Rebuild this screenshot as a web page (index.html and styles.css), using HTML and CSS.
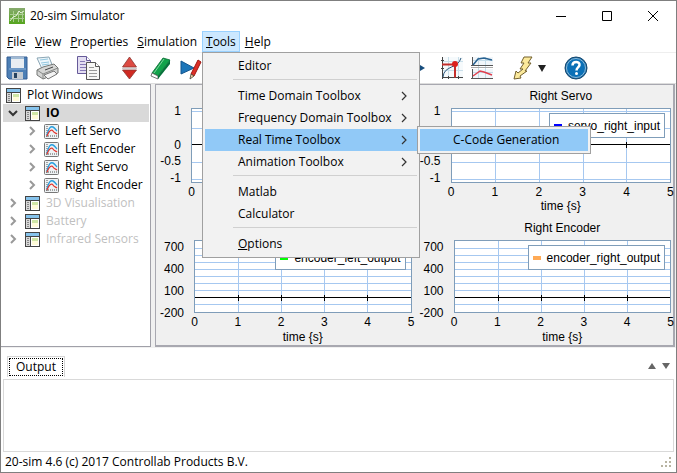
FILE: index.html
```html
<!DOCTYPE html>
<html lang="en">
<head>
<meta charset="utf-8">
<title>20-sim Simulator</title>
<link rel="stylesheet" href="styles.css">
</head>
<body>
<svg class="defs" aria-hidden="true">
  <defs>
    <symbol id="i-window" viewBox="0 0 15 15">
      <rect x=".5" y=".5" width="14" height="14" fill="#fff" stroke="#444"/>
      <path d="M1 1h13v3H1z" fill="#86c3ec"/>
      <path d="M1 4.500h13M5.500 5v9" stroke="#444"/>
      <path d="M1 5h4v9H1z" fill="#d8d8d8"/>
      <path d="M2 6.500h2M2 8.500h2M2 10.500h2M2 12.500h2" stroke="#888"/>
      <path d="M7 6h6v3H7z" fill="#cfe6a5"/>
      <path d="M7 9h6v4H7z" fill="#fffbd8"/>
    </symbol>
    <symbol id="i-plot" viewBox="0 0 15 15">
      <rect x=".5" y=".5" width="14" height="14" rx="1" fill="#eef2f4" stroke="#777"/>
      <path d="M3 2v11M2 12h11" stroke="#555" stroke-dasharray="1 1"/>
      <path d="M3 11C5 3 7 2 9 3S12 6 13 7" fill="none" stroke="#289fdf" stroke-width="1.500"/>
      <path d="M3 12C5 6 8 5 9 7S12 9 13 10" fill="none" stroke="#e2362e" stroke-width="1.200"/>
    </symbol>
    <symbol id="i-chev" viewBox="0 0 8 10">
      <path d="M2 1l4 4-4 4" fill="none" stroke="currentColor" stroke-width="2"/>
    </symbol>
    <symbol id="i-arrow" viewBox="0 0 8 10">
      <path d="M2 1l4 4-4 4" fill="none" stroke="#333" stroke-width="1.200"/>
    </symbol>
  </defs>
</svg>
<div class="window">
  <header class="titlebar">
    <svg class="app-icon" viewBox="0 0 16 16">
      <defs><linearGradient id="g-app" x2="0" y2="1"><stop stop-color="#87aa6e"/><stop offset="1" stop-color="#55a51d"/></linearGradient></defs>
      <path fill="url(#g-app)" d="M0 0h16v16H0z"/>
      <path d="M1 6.500h14M1 10.500h14M4.500 3v11M9.500 3v11M13.500 3v11" stroke="#a9cc90"/>
      <path d="M1 13L4 9l3-1 3-5 2 2 3-2" fill="none" stroke="#e3f0d9"/>
    </svg>
    <h1>20-sim Simulator</h1>
    <button class="win-btn" aria-label="Minimize"><svg viewBox="0 0 12 12"><path d="M1 6.500h10" stroke="#000"/></svg></button>
    <button class="win-btn" aria-label="Maximize"><svg viewBox="0 0 12 12"><path d="M1.500 1.500h9v9h-9z" fill="none" stroke="#000"/></svg></button>
    <button class="win-btn" aria-label="Close"><svg viewBox="0 0 12 12"><path d="M1 1l10 10M11 1L1 11" stroke="#000"/></svg></button>
  </header>

  <nav class="menubar">
    <button><u>F</u>ile</button>
    <button><u>V</u>iew</button>
    <button><u>P</u>roperties</button>
    <button><u>S</u>imulation</button>
    <div class="menu-host">
      <button class="open"><u>T</u>ools</button>
      <div class="menu">
        <button>Editor</button>
        <hr>
        <button>Time Domain Toolbox<svg><use href="#i-arrow"/></svg></button>
        <button>Frequency Domain Toolbox<svg><use href="#i-arrow"/></svg></button>
        <div class="menu-host">
          <button class="active">Real Time Toolbox<svg><use href="#i-arrow"/></svg></button>
          <div class="submenu"><button class="active">C-Code Generation</button></div>
        </div>
        <button>Animation Toolbox<svg><use href="#i-arrow"/></svg></button>
        <hr>
        <button>Matlab</button>
        <button>Calculator</button>
        <hr>
        <button><span><u>O</u>ptions</span></button>
      </div>
    </div>
    <button><u>H</u>elp</button>
  </nav>

  <div class="toolbar">
    <div class="tools tools-file">
      <button aria-label="Save"><svg viewBox="0 0 24 24">
        <path d="M2 1h20v22H4l-2-2z" fill="#4d7fb5" stroke="#345f94"/>
        <path d="M6 1h13v11H6z" fill="#e8edf2"/><path d="M6 1h13v2H6z" fill="#9fb9d3"/>
        <path d="M4 13h17" stroke="#8fb3d8"/><path d="M7 16h11v7H7z" fill="#c3cad1"/><path d="M9 17h3v5H9z" fill="#26425f"/>
      </svg></button>
      <button aria-label="Print"><svg viewBox="0 0 24 24">
        <path d="M2 2l12-1 4 10-11 2z" fill="#edf6fb" stroke="#8ba6b5"/><path d="M5 4l8-1M6 7l8-1M7 9l7-1" stroke="#92c7df"/>
        <path d="M2 14l6-3 11-3 4 4v5L8 23l-6-4z" fill="#d5d6d5" stroke="#747674"/><path d="M2 14l6 4 15-6M8 18v5" fill="none" stroke="#858785"/>
        <path d="M9 19l10-4 3 3-9 5z" fill="#f4f4f4" stroke="#777"/><path d="M10 14l8-3" stroke="#444"/>
      </svg></button>
    </div>
    <button aria-label="Copy"><svg viewBox="0 0 24 24">
      <path d="M.5.500h9l4 4v13H.5z" fill="#e3def1" stroke="#665a99"/><path d="M9.500.500v4h4" fill="#fff" stroke="#665a99"/>
      <path d="M3 5.500h5M3 8.500h8M3 11.500h8M3 14.500h6" stroke="#8679b6"/>
      <path d="M9.500 6.500h9l4 4v13h-13z" fill="#f7f7f5" stroke="#555"/><path d="M18.500 6.500v4h4" fill="#fff" stroke="#555"/>
      <path d="M12 11.500h5M12 14.500h8M12 17.500h8M12 20.500h8" stroke="#999"/>
    </svg></button>
    <div class="tools tools-sim">
      <button aria-label="Expand or collapse"><svg viewBox="0 0 24 24">
        <path d="M10.500 1l7 10h-14z" fill="#dd4a42" stroke="#8a3530" stroke-width=".8"/><path d="M3.500 14h14l-7 9z" fill="#cf2a22" stroke="#8a3530" stroke-width=".8"/><path d="M3 12.500h15" stroke="#cfcfcf"/>
      </svg></button>
      <button aria-label="Clear"><svg viewBox="0 0 24 24">
        <path d="M3 17L14 2l7 2-12 16z" fill="#12a34b" stroke="#066a30" stroke-width=".8"/><path d="M3 17l6 3v3l-7-3z" fill="#fff" stroke="#555" stroke-width=".8"/><path d="M21 4v4L9 23v-3z" fill="#06723a"/><path d="M5 17L15 3" stroke="#7fd19d"/>
      </svg></button>
      <button aria-label="Run and edit"><svg viewBox="0 0 24 24">
        <path d="M2 5l13 7-13 6z" fill="#1c75b8" stroke="#13558e"/>
        <path d="M12 18L19 4l3 2-7 14z" fill="#dc3028" stroke="#a01711"/><path d="M12 18l3 2-4 3z" fill="#f1cda2" stroke="#443" stroke-width=".8"/>
      </svg></button>
    </div>
    <div class="tools tools-view">
      <button class="run-dot" aria-label="Step"><svg viewBox="0 0 6 10"><path d="M0 2l5 3-5 3z" fill="#174d7d"/></svg></button>
      <button aria-label="Inspect point"><svg viewBox="0 0 24 24">
        <path d="M2 1h21v22H2z" fill="#f6fafc"/><path d="M8.500 1v21M18.500 1v21M2 5.500h21M2 14.500h21" stroke="#c9dfea"/>
        <path d="M2.500 1v22M2 21.500h21" stroke="#444"/><path d="M1 4.500h3M1 12.500h3M8.500 20v3M18.500 20v3" stroke="#444"/>
        <path d="M3 21C4 9 18 13 21 2" fill="none" stroke="#28577c"/>
        <path d="M2 8.500h13v13" fill="none" stroke="#c32f2c" stroke-width="2"/><circle cx="15" cy="8" r="3" fill="#dc211e"/>
      </svg></button>
      <button aria-label="Multiple plots"><svg viewBox="0 0 24 24">
        <path d="M2 1h21v9H2zM2 13h21v9H2z" fill="#f1f6fa"/><path d="M8.500 1v21M15.500 1v21M2 4.500h21M2 16.500h21" stroke="#c4dce9"/>
        <path d="M2.500 1v9M1 9.500h22M2.500 13v10M1 22.500h22" stroke="#555"/><path d="M1 11.500h22" stroke="#aaa"/>
        <path d="M3 9l5-6 6-1 8 2" fill="none" stroke="#286291" stroke-width="1.500"/><path d="M3 20l7-5 4 1 8 3" fill="none" stroke="#e13e4d" stroke-width="1.500"/>
      </svg></button>
    </div>
    <button class="bolt" aria-label="Quick actions"><svg viewBox="0 0 24 24">
      <path d="M12 1h8l-4 6h3l-6 8h2l-7 5 1 2-7 1 2-8 2 2 5-4H8l4-6H9z" fill="#fbe99b" stroke="#72602d"/>
    </svg><svg class="caret" viewBox="0 0 8 8"><path d="M0 1h8L4 8z" fill="#222"/></svg></button>
    <button aria-label="Help"><svg viewBox="0 0 24 24">
      <circle cx="12" cy="12" r="11" fill="#1269a8" stroke="#17476c"/><circle cx="12" cy="12" r="9.500" fill="#0a70b7" stroke="#8dbad8"/>
      <path d="M8.500 9.500c0-5 7.500-4.500 7-.5-.3 2.500-3 2.500-3 5.500" fill="none" stroke="#fff" stroke-width="2.500"/><circle cx="12.500" cy="17.500" r="1.500" fill="#fff"/>
    </svg></button>
  </div>

  <main class="workspace">
    <ul class="tree">
      <li class="root"><svg class="ico"><use href="#i-window"/></svg>Plot Windows</li>
      <li class="node selected"><svg class="chev down"><use href="#i-chev"/></svg><svg class="ico"><use href="#i-window"/></svg>IO</li>
      <li class="leaf"><svg class="chev"><use href="#i-chev"/></svg><svg class="ico"><use href="#i-plot"/></svg>Left Servo</li>
      <li class="leaf"><svg class="chev"><use href="#i-chev"/></svg><svg class="ico"><use href="#i-plot"/></svg>Left Encoder</li>
      <li class="leaf"><svg class="chev"><use href="#i-chev"/></svg><svg class="ico"><use href="#i-plot"/></svg>Right Servo</li>
      <li class="leaf"><svg class="chev"><use href="#i-chev"/></svg><svg class="ico"><use href="#i-plot"/></svg>Right Encoder</li>
      <li class="node off"><svg class="chev"><use href="#i-chev"/></svg><svg class="ico"><use href="#i-window"/></svg>3D Visualisation</li>
      <li class="node off"><svg class="chev"><use href="#i-chev"/></svg><svg class="ico"><use href="#i-window"/></svg>Battery</li>
      <li class="node off"><svg class="chev"><use href="#i-chev"/></svg><svg class="ico"><use href="#i-window"/></svg>Infrared Sensors</li>
    </ul>

    <section class="plots">
      <figure class="chart servo">
        <figcaption></figcaption>
        <div class="y-axis"><span>1</span><span></span><span>0</span><span>-0.5</span><span>-1</span></div>
        <div class="plot">
          <svg class="grid"><g class="lines"><line x1="20%" x2="20%" y2="100%"/><line x1="40%" x2="40%" y2="100%"/><line x1="60%" x2="60%" y2="100%"/><line x1="80%" x2="80%" y2="100%"/><line x2="100%" y1="4%" y2="4%"/><line x2="100%" y1="27%" y2="27%"/><line x2="100%" y1="73%" y2="73%"/><line x2="100%" y1="96%" y2="96%"/></g><g class="zero"><line x2="100%" y1="49%" y2="49%"/></g></svg>
        </div>
        <div class="x-axis"><span>0</span></div>
      </figure>
      <figure class="chart servo">
        <figcaption>Right Servo</figcaption>
        <div class="y-axis"><span>1</span><span></span><span>0</span><span>-0.5</span><span>-1</span></div>
        <div class="plot">
          <svg class="grid"><g class="lines"><line x1="20%" x2="20%" y2="100%"/><line x1="40%" x2="40%" y2="100%"/><line x1="60%" x2="60%" y2="100%"/><line x1="80%" x2="80%" y2="100%"/><line x2="100%" y1="4%" y2="4%"/><line x2="100%" y1="27%" y2="27%"/><line x2="100%" y1="73%" y2="73%"/><line x2="100%" y1="96%" y2="96%"/></g><g class="zero"><line x2="100%" y1="49%" y2="49%"/><line x1="20%" x2="20%" y1="45%" y2="54%"/><line x1="40%" x2="40%" y1="45%" y2="54%"/><line x1="60%" x2="60%" y1="45%" y2="54%"/><line x1="80%" x2="80%" y1="45%" y2="54%"/></g></svg>
          <div class="legend"><i class="blue"></i>servo_right_input</div>
        </div>
        <div class="x-axis"><span>0</span><span>1</span><span>2</span><span>3</span><span>4</span><span>5</span></div>
        <div class="x-title">time {s}</div>
      </figure>
      <figure class="chart encoder">
        <figcaption></figcaption>
        <div class="y-axis"><span>700</span><span>400</span><span>100</span><span>-200</span></div>
        <div class="plot">
          <svg class="grid"><g class="lines"><line x1="20%" x2="20%" y2="100%"/><line x1="40%" x2="40%" y2="100%"/><line x1="60%" x2="60%" y2="100%"/><line x1="80%" x2="80%" y2="100%"/><line x2="100%" y1="10%" y2="10%"/><line x2="100%" y1="20%" y2="20%"/><line x2="100%" y1="30%" y2="30%"/><line x2="100%" y1="40%" y2="40%"/><line x2="100%" y1="50%" y2="50%"/><line x2="100%" y1="60%" y2="60%"/><line x2="100%" y1="70%" y2="70%"/><line x2="100%" y1="90%" y2="90%"/></g><g class="zero"><line x2="100%" y1="80%" y2="80%"/><line x1="20%" x2="20%" y1="76%" y2="85%"/><line x1="40%" x2="40%" y1="76%" y2="85%"/><line x1="60%" x2="60%" y1="76%" y2="85%"/><line x1="80%" x2="80%" y1="76%" y2="85%"/></g></svg>
          <div class="legend"><i class="green"></i>encoder_left_output</div>
        </div>
        <div class="x-axis"><span>0</span><span>1</span><span>2</span><span>3</span><span>4</span><span>5</span></div>
        <div class="x-title">time {s}</div>
      </figure>
      <figure class="chart encoder">
        <figcaption>Right Encoder</figcaption>
        <div class="y-axis"><span>700</span><span>400</span><span>100</span><span>-200</span></div>
        <div class="plot">
          <svg class="grid"><g class="lines"><line x1="20%" x2="20%" y2="100%"/><line x1="40%" x2="40%" y2="100%"/><line x1="60%" x2="60%" y2="100%"/><line x1="80%" x2="80%" y2="100%"/><line x2="100%" y1="10%" y2="10%"/><line x2="100%" y1="20%" y2="20%"/><line x2="100%" y1="30%" y2="30%"/><line x2="100%" y1="40%" y2="40%"/><line x2="100%" y1="50%" y2="50%"/><line x2="100%" y1="60%" y2="60%"/><line x2="100%" y1="70%" y2="70%"/><line x2="100%" y1="90%" y2="90%"/></g><g class="zero"><line x2="100%" y1="80%" y2="80%"/><line x1="20%" x2="20%" y1="76%" y2="85%"/><line x1="40%" x2="40%" y1="76%" y2="85%"/><line x1="60%" x2="60%" y1="76%" y2="85%"/><line x1="80%" x2="80%" y1="76%" y2="85%"/></g></svg>
          <div class="legend"><i class="orange"></i>encoder_right_output</div>
        </div>
        <div class="x-axis"><span>0</span><span>1</span><span>2</span><span>3</span><span>4</span><span>5</span></div>
        <div class="x-title">time {s}</div>
      </figure>
    </section>
  </main>

  <section class="output">
    <div class="tabs">
      <button class="tab"><span>Output</span></button>
      <button class="step" aria-label="Previous"><svg viewBox="0 0 8 6"><path d="M4 0l4 6H0z" fill="#666"/></svg></button>
      <button class="step" aria-label="Next"><svg viewBox="0 0 8 6"><path d="M0 0h8L4 6z" fill="#666"/></svg></button>
    </div>
    <div class="log"></div>
  </section>

  <footer class="status">
    <span>20-sim 4.6 (c) 2017 Controllab Products B.V.</span>
    <svg class="grip" viewBox="0 0 10 10"><path d="M8 0h2v2H8zM4 4h2v2H4zM8 4h2v2H8zM0 8h2v2H0zM4 8h2v2H4zM8 8h2v2H8z" fill="#b8b4a2"/></svg>
  </footer>
</div>
</body>
</html>
```
FILE: styles.css
```css
* { box-sizing: border-box; }
body { margin: 0; font: 12px/16px "Open Sans", "Noto Sans", sans-serif; color: #000; background: #fff; }
button { font: inherit; color: inherit; background: none; border: 0; padding: 0; margin: 0; }
svg { display: block; flex: none; }
u { text-underline-offset: 1px; }
.defs { position: absolute; width: 0; height: 0; }

.window { display: flex; flex-direction: column; min-height: 100vh; border: 1px solid #7f7f7f; background: #fff; }

.titlebar { display: flex; align-items: center; height: 30px; padding-left: 8px; }
.app-icon { width: 16px; height: 16px; }
.titlebar h1 { flex: 1; margin: 0 0 0 5px; font-size: 12px; font-weight: 400; }
.win-btn { display: grid; place-items: center; width: 46px; height: 30px; }
.win-btn svg { width: 12px; height: 12px; }

.menubar { display: flex; gap: 1px; height: 21px; padding-left: 2px; }
.menubar > button, .menu-host > .open { height: 21px; padding: 0 4px; white-space: nowrap; }
.menu-host { position: relative; }
.menu-host > .open { background: #cce8ff; outline: 1px solid #99d1ff; outline-offset: -1px; }
.menu, .submenu { position: absolute; z-index: 2; background: #f2f2f2; border: 1px solid #a0a0a0; padding: 2px; }
.menu { top: 21px; left: 0; width: 218px; }
.submenu { top: -3px; left: 212px; width: 174px; }
.menu button { display: flex; align-items: center; justify-content: space-between; width: 100%; height: 22px; padding: 0 9px 0 33px; white-space: nowrap; }
.menu svg { width: 8px; height: 10px; }
.menu .active { background: #91c9f7; }
.menu hr { height: 1px; margin: 2px 0 5px 28px; border: 0; background: #d0d0d0; }

.toolbar { display: flex; align-items: center; gap: 18px; height: 32px; padding: 0 6px 0 4px; border-top: 1px solid #eee; border-bottom: 1px solid #ddd; }
.toolbar svg { width: 24px; height: 24px; }
.tools { display: flex; gap: 6px; }
.tools-view { margin-left: 199px; }
.toolbar .run-dot svg { width: 6px; height: 10px; }
.run-dot { margin-right: 8px; }
.bolt { display: flex; align-items: center; }
.toolbar .caret { width: 8px; height: 8px; margin-left: 2px; }

.workspace { display: grid; grid-template-columns: 150px 1fr; gap: 4px; padding-bottom: 1px; background: #f0f0f0; }
.tree { list-style: none; margin: 0; padding: 1px 1px 1px 2px; background: #fff; border: 1px solid #a0a0a8; border-left: 0; }
.tree li { display: flex; align-items: center; gap: 6px; height: 18px; white-space: nowrap; }
.tree .ico { width: 15px; height: 15px; }
.tree .chev { width: 8px; height: 10px; color: #999; }
.tree .down { color: #333; transform: rotate(90deg); }
.tree .root { padding-left: 3px; }
.tree .node { padding-left: 6px; }
.tree .chev + .ico { margin-left: 2px; }
.tree .leaf { padding-left: 25px; }
.tree .selected { background: #d9d9d9; font-weight: 700; }
.tree .off { color: #bfbfbf; }

.plots { display: grid; grid-template-columns: 1fr 1fr; grid-template-rows: 132px 128px; column-gap: 2px; margin-right: 1px; border: 2px solid #a8a8b0; border-width: 1px 2px 2px 1px; background: #f0f0f0; }
.chart { display: grid; margin: 0; padding-right: 2px; font: 12px/14px "Liberation Sans", sans-serif; }
.servo { grid-template: 23px 75px 16px 14px / 35px 1fr; }
.encoder { grid-template: 23px 73px 17px 14px / 38px 1fr; }
.chart figcaption { grid-column: 2; text-align: center; line-height: 23px; }
.y-axis { display: flex; flex-direction: column; justify-content: space-between; text-align: right; padding-right: 10px; margin: -4px 0 -2px; }
.y-axis span { height: 14px; }
.encoder .y-axis { margin: 0 0 -7px; }
.plot { position: relative; background: #fff; border: 1px solid #7f9db9; }
.grid { width: 100%; height: 100%; shape-rendering: crispEdges; }
.lines { stroke: #a6c8f0; }
.zero { stroke: #000; }
.legend { position: absolute; top: 4px; right: 5px; display: flex; align-items: center; gap: 6px; height: 25px; padding: 0 4px; background: #fff; border: 1px solid #7f9db9; }
.legend i { width: 8px; height: 4px; }
.blue { background: #00f; }
.green { background: #0f0; }
.orange { background: #ffaa55; }
.x-axis { grid-column: 2; display: flex; justify-content: space-between; margin: 2px -3px 0; }
.x-axis span { width: 7px; text-align: center; }
.x-title { grid-column: 2; text-align: center; }

.output { flex: 1; display: flex; flex-direction: column; padding: 8px 2px 0; }
.tabs { display: flex; align-items: center; height: 23px; padding: 0 1px 3px 4px; }
.tab { flex: none; padding: 1px; margin-right: auto; border: 1px solid #d5d5d5; border-bottom: 0; }
.tab span { display: block; padding: 0 6px; border: 1px dotted #000; }
.step { width: 14px; display: grid; place-items: center; }
.step svg { width: 8px; height: 6px; }
.log { flex: 1; min-height: 40px; border: 1px solid #d9d9d9; }
.status { display: flex; justify-content: space-between; align-items: center; height: 20px; padding: 0 5px 0 4px; }
.grip { width: 10px; height: 10px; }
```
